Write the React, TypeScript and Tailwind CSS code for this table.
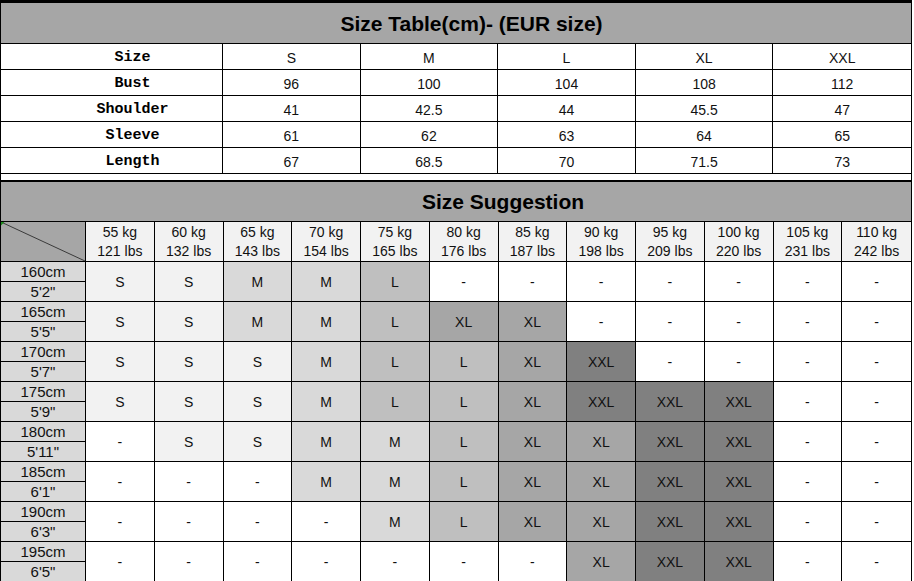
const SIZE_TABLE = [
  ["Size", "S", "M", "L", "XL", "XXL"],
  ["Bust", "96", "100", "104", "108", "112"],
  ["Shoulder", "41", "42.5", "44", "45.5", "47"],
  ["Sleeve", "61", "62", "63", "64", "65"],
  ["Length", "67", "68.5", "70", "71.5", "73"],
];

const WEIGHTS = [
  ["55 kg", "121 lbs"],
  ["60 kg", "132 lbs"],
  ["65 kg", "143 lbs"],
  ["70 kg", "154 lbs"],
  ["75 kg", "165 lbs"],
  ["80 kg", "176 lbs"],
  ["85 kg", "187 lbs"],
  ["90 kg", "198 lbs"],
  ["95 kg", "209 lbs"],
  ["100 kg", "220 lbs"],
  ["105 kg", "231 lbs"],
  ["110 kg", "242 lbs"],
];

const ROWS: { cm: string; ft: string; sizes: string[] }[] = [
  { cm: "160cm", ft: "5'2\"", sizes: ["S", "S", "M", "M", "L", "-", "-", "-", "-", "-", "-", "-"] },
  { cm: "165cm", ft: "5'5\"", sizes: ["S", "S", "M", "M", "L", "XL", "XL", "-", "-", "-", "-", "-"] },
  { cm: "170cm", ft: "5'7\"", sizes: ["S", "S", "S", "M", "L", "L", "XL", "XXL", "-", "-", "-", "-"] },
  { cm: "175cm", ft: "5'9\"", sizes: ["S", "S", "S", "M", "L", "L", "XL", "XXL", "XXL", "XXL", "-", "-"] },
  { cm: "180cm", ft: "5'11\"", sizes: ["-", "S", "S", "M", "M", "L", "XL", "XL", "XXL", "XXL", "-", "-"] },
  { cm: "185cm", ft: "6'1\"", sizes: ["-", "-", "-", "M", "M", "L", "XL", "XL", "XXL", "XXL", "-", "-"] },
  { cm: "190cm", ft: "6'3\"", sizes: ["-", "-", "-", "-", "M", "L", "XL", "XL", "XXL", "XXL", "-", "-"] },
  { cm: "195cm", ft: "6'5\"", sizes: ["-", "-", "-", "-", "-", "-", "-", "XL", "XXL", "XXL", "-", "-"] },
];

const FILL: Record<string, string> = {
  S: "bg-[#f2f2f2]",
  M: "bg-[#d9d9d9]",
  L: "bg-[#bfbfbf]",
  XL: "bg-[#a6a6a6]",
  XXL: "bg-[#808080]",
  "-": "bg-white",
};

export default function App() {
  return (
    <div className="w-[914px] h-[581px] overflow-hidden bg-white font-['Liberation_Sans',Arial,sans-serif] text-[#111]">
      <div className="w-[912px] border-l border-r border-black">

        {/* SIZE TABLE */}
        <div className="border-t-[3px] border-black">
          <div className="h-[41px] pl-[31px] pt-[1px] bg-[#a6a6a6] border-b border-black flex items-center justify-center text-[21px] font-bold text-black">
            Size Table(cm)- (EUR size)
          </div>
          {SIZE_TABLE.map((row) => (
            <div key={row[0]} className="h-[26px] grid grid-cols-[222px_repeat(5,minmax(0,1fr))] grid-rows-[minmax(0,1fr)]">
              {row.map((cell, i) => (
                <div
                  key={i}
                  className={`min-h-0 border-b border-black flex items-center justify-center pt-[2px] leading-[18px] ${
                    i < 5 ? "border-r" : ""
                  } ${
                    i === 0
                      ? "pl-[42px] font-['Liberation_Mono',monospace] font-bold text-[15px] text-black"
                      : "text-[14px]"
                  }`}
                >
                  {cell}
                </div>
              ))}
            </div>
          ))}
        </div>

        <div className="h-[6px]" />

        {/* SIZE SUGGESTION */}
        <div className="border-t-2 border-black">
          <div className="h-[40px] pl-[94px] pt-[1px] bg-[#a6a6a6] border-b border-black flex items-center justify-center text-[21px] font-bold text-black">
            Size Suggestion
          </div>

          <div className="h-[40px] grid grid-cols-[85px_repeat(12,minmax(0,1fr))] grid-rows-[minmax(0,1fr)]">
            <div className="relative min-h-0 bg-[#a6a6a6] border-r border-b border-black">
              <svg className="absolute inset-0 w-full h-full" viewBox="0 0 84 39" preserveAspectRatio="none">
                <line x1="0" y1="0" x2="84" y2="39" stroke="#3a3a3a" strokeWidth="1" />
                <polygon points="0,0 3.5,0 0,3.5" fill="#1a8a1a" />
              </svg>
            </div>
            {WEIGHTS.map(([kg, lbs], i) => (
              <div
                key={kg}
                className={`min-h-0 bg-[#f2f2f2] border-b border-black flex flex-col items-center justify-center pt-[1px] text-[14px] leading-[19px] ${
                  i < 11 ? "border-r" : ""
                }`}
              >
                <span>{kg}</span>
                <span>{lbs}</span>
              </div>
            ))}
          </div>

          {ROWS.map((row) => (
            <div key={row.cm} className="h-[40px] grid grid-cols-[85px_repeat(12,minmax(0,1fr))] grid-rows-[minmax(0,1fr)]">
              <div className="min-h-0 bg-[#d9d9d9] border-r border-b border-black flex flex-col text-[15px] leading-[18px]">
                <div className="h-[20px] shrink-0 border-b border-black flex items-center justify-center">{row.cm}</div>
                <div className="flex-1 min-h-0 flex items-center justify-center">{row.ft}</div>
              </div>
              {row.sizes.map((s, i) => (
                <div
                  key={i}
                  className={`min-h-0 ${FILL[s]} border-b border-black flex items-center justify-center text-[14px] leading-[18px] ${
                    i < 11 ? "border-r" : ""
                  }`}
                >
                  {s}
                </div>
              ))}
            </div>
          ))}
        </div>
      </div>
    </div>
  );
}
